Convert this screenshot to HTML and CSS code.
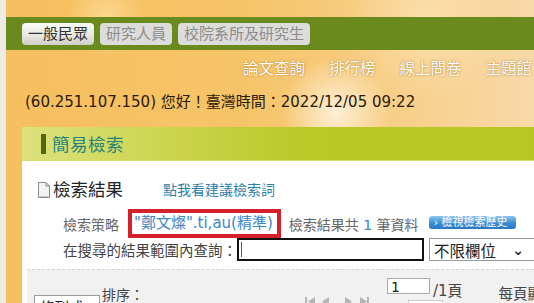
FILE: index.html
```html
<!DOCTYPE html>
<html lang="zh-Hant">
<head>
<meta charset="utf-8">
<title>簡易檢索</title>
<link rel="stylesheet" href="styles.css">
</head>
<body>
<div class="page">
  <div class="topstrip"></div>
  <div class="tabbar">
    <span class="tab active">一般民眾</span>
    <span class="tab">研究人員</span>
    <span class="tab">校院系所及研究生</span>
  </div>
  <nav class="nav">
    <a>論文查詢</a><a>排行榜</a><a>線上問卷</a><a>主題館</a>
  </nav>
  <div class="greet">(60.251.107.150) 您好！臺灣時間：2022/12/05 09:22</div>
  <section class="panel">
    <div class="panel-head"><span class="bar"></span><h2>簡易檢索</h2></div>
    <div class="panel-body">
      <div class="result-title">
        <svg class="doc" width="13" height="16" viewBox="0 0 13 16"><path d="M1.5 0.5h7.5l3.5 3.5v11.5h-11z" fill="#f4f4f2" stroke="#8a8a8a"/><path d="M9 0.5v3.5h3.5" fill="none" stroke="#8a8a8a"/><path d="M2.5 14.5h9" stroke="#c8c8c8"/></svg>
        <h3>檢索結果</h3>
        <a class="suggest">點我看建議檢索詞</a>
      </div>
      <div class="row strategy">
        <span class="label">檢索策略</span>
        <span class="query">"鄭文燦".ti,au(精準)</span>
        <span class="count">檢索結果共 <b>1</b> 筆資料</span>
        <span class="hist-btn">› 檢視檢索歷史</span>
      </div>
      <div class="row within">
        <span class="label2">在搜尋的結果範圍內查詢：</span>
        <span class="textbox"><span class="caret"></span></span>
        <span class="select field">不限欄位<span class="chev">⌄</span></span>
      </div>
      <div class="toolbar">
        <span class="select mode">條列式<span class="chev">⌄</span></span>
        <span class="sort">排序：</span>
        <span class="pager">
          <svg width="64" height="10" viewBox="0 0 64 10"><g fill="#b4b4b4"><rect x="0" y="1" width="2" height="9"/><path d="M10 1v9l-7-4.5z"/><path d="M24 1v9l-7-4.5z"/><path d="M40 1v9l7-4.5z"/><path d="M55 1v9l7-4.5z"/><rect x="62" y="1" width="2" height="9"/></g></svg>
        </span>
        <span class="pagecol">
          <span class="pagebox">1</span>
          <span class="perpage-box"></span>
        </span>
        <span class="total">/1頁</span>
        <span class="perpage">每頁顯示</span>
      </div>
    </div>
  </section>
</div>
</body>
</html>
```
FILE: styles.css
```css
html, body {
  margin: 0;
  padding: 0;
}
body {
  width: 534px;
  height: 303px;
  overflow: hidden;
  font-family: "DejaVu Sans", "Noto Sans CJK TC", sans-serif;
}
.page {
  border-left: 6px solid #eeebe4;
  height: 303px;
  overflow: hidden;
  background:
    radial-gradient(circle at 330px 112px, rgba(255, 246, 230, .85), rgba(255, 246, 230, 0) 55px),
    radial-gradient(circle at 100px 18px, rgba(255, 232, 175, .6), rgba(255, 232, 175, 0) 40px),
    radial-gradient(circle at 420px 20px, rgba(255, 236, 200, .5), rgba(255, 236, 200, 0) 80px),
    linear-gradient(90deg, #f6bf5f 0%, #f6c468 45%, #f7cf8a 75%, #f8d9a8 100%);
}
.topstrip {
  height: 17px;
}
.tabbar {
  height: 33px;
  background: #6a8a1e;
  display: flex;
  gap: 6px;
  padding: 6px 0 0 16px;
  box-sizing: border-box;
}
.tab {
  height: 22px;
  line-height: 22px;
  padding: 0 6px;
  font-size: 15px;
  border-radius: 4px;
  background: #dcdcda;
  color: #8c8c8c;
  box-sizing: border-box;
}
.tab.active {
  background: linear-gradient(#fbfbf8, #e6e6e0 60%, #cfcfc8);
  color: #333;
}
.nav {
  height: 34px;
  display: flex;
  justify-content: flex-end;
  gap: 24px;
  align-items: center;
  padding-right: 2px;
}
.nav a {
  color: #fff;
  font-size: 15.5px;
  white-space: nowrap;
  text-shadow: 0 0 2px rgba(170, 110, 20, .75), 0 0 1px rgba(170, 110, 20, .6);
}
.greet {
  margin-left: 19px;
  padding-top: 8px;
  line-height: 20px;
  height: 20px;
  font-size: 15px;
  color: #2a1a0a;
  margin-bottom: 15px;
  white-space: nowrap;
}
.panel {
  margin-left: 16px;
  background: #fff;
  height: 200px;
}
.panel-head {
  height: 34px;
  display: flex;
  align-items: center;
  background: linear-gradient(90deg, #dce17c 0%, #cbd44c 30%, #bac828 55%, #b9c726 100%);
  border-bottom: 1px solid #d6de6e;
  box-sizing: border-box;
}
.bar {
  width: 5px;
  height: 20px;
  background: #4f6912;
  margin-left: 19px;
}
.panel-head h2 {
  margin: 0 0 0 6px;
  font-size: 17.5px;
  font-weight: normal;
  color: #24837f;
  letter-spacing: 0.5px;
}
.panel-body {
  padding-left: 15px;
}
.result-title {
  display: flex;
  align-items: center;
  height: 22px;
  padding-top: 16px;
}
.doc {
  margin-top: 4px;
}
.result-title h3 {
  margin: 0 0 0 3px;
  font-size: 17.5px;
  font-weight: normal;
  color: #222;
}
.suggest {
  margin-left: 40px;
  font-size: 14px;
  color: #2a7fa8;
  margin-top: 1px;
}
.row {
  display: flex;
  align-items: center;
  padding-left: 26px;
}
.row > * {
  flex-shrink: 0;
}
.strategy {
  margin-top: 10px;
  height: 29px;
  font-size: 14px;
  color: #666;
}
.label {
  width: 65px;
}
.query {
  border: 4px solid #d3202b;
  height: 21px;
  line-height: 21px;
  padding: 0 4px 0 2px;
  color: #3c84c6;
  font-size: 15px;
  white-space: nowrap;
}
.count {
  margin-left: 8px;
  font-size: 14px;
  white-space: nowrap;
}
.count b {
  font-weight: normal;
  color: #3a88c8;
}
.hist-btn {
  margin-left: 10px;
  height: 13px;
  line-height: 13px;
  width: 87px;
  box-sizing: border-box;
  padding-left: 5px;
  border-radius: 3px;
  background: linear-gradient(#8cc6f0, #3a8dd2 55%, #2a77bd);
  color: #fff;
  font-size: 11px;
  white-space: nowrap;
  margin-top: -2px;
}
.within {
  height: 23px;
  font-size: 14.5px;
  color: #444;
}
.label2 {
  white-space: nowrap;
}
.textbox {
  width: 187px;
  height: 23px;
  border: 2px solid #111;
  box-sizing: border-box;
  display: flex;
  align-items: center;
  padding-left: 2px;
}
.caret {
  width: 1px;
  height: 15px;
  background: #555;
}
.select {
  border: 1px solid #9a9a9a;
  box-sizing: border-box;
  background: #fff;
  color: #222;
  display: flex;
  align-items: center;
  white-space: nowrap;
}
.field {
  margin-left: 5px;
  width: 110px;
  height: 23px;
  padding-left: 4px;
  font-size: 15.5px;
}
.chev {
  margin-left: auto;
  margin-right: 6px;
  font-size: 14px;
  font-weight: bold;
}
.field .chev {
  margin-right: 14px;
}
.toolbar {
  margin: 8px 0 0 -10px;
  height: 40px;
  background: #f1f1f1;
  border-top: 1px dashed #d6d6d6;
  display: flex;
  align-items: flex-start;
  padding: 8px 0 0 7px;
  font-size: 14px;
  color: #444;
}
.toolbar > * {
  flex-shrink: 0;
  white-space: nowrap;
}
.mode {
  margin-top: 17px;
  width: 66px;
  height: 22px;
  padding-left: 5px;
  font-size: 14.5px;
}
.sort {
  margin: 6px 0 0 2px;
}
.pager {
  margin: 18px 0 0 161px;
  display: flex;
}
.pagecol {
  margin-left: 18px;
  width: 43px;
  display: flex;
  flex-direction: column;
  align-items: flex-start;
}
.pagebox {
  width: 43px;
  height: 16px;
  line-height: 16px;
  border: 1px solid #aaa;
  box-sizing: border-box;
  background: #fff;
  font-size: 14px;
  padding-left: 3px;
  color: #222;
}
.perpage-box {
  margin: 6px 0 0 21px;
  width: 33px;
  height: 10px;
  flex-shrink: 0;
  border: 1px solid #ccc;
  background: #fff;
}
.total {
  margin: 1px 0 0 3px;
  font-size: 15px;
}
.perpage {
  margin: 4px 0 0 36px;
  font-size: 14.5px;
}
```
